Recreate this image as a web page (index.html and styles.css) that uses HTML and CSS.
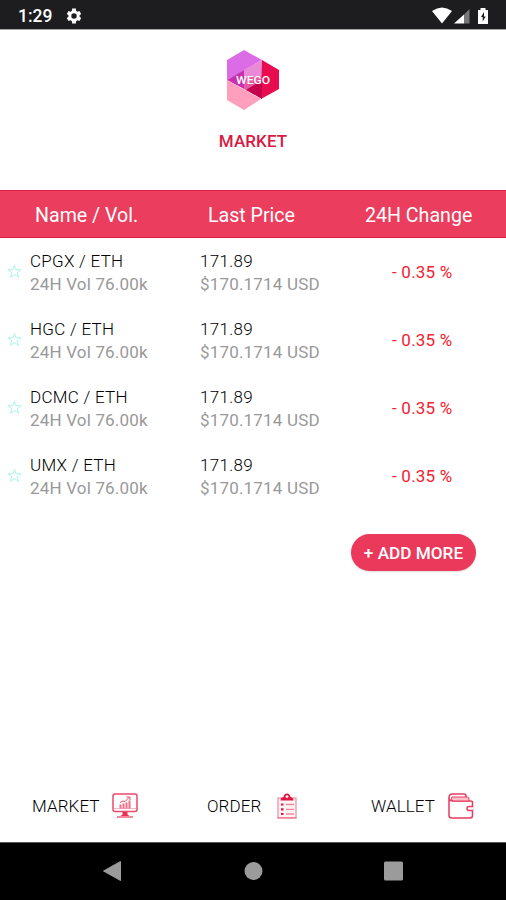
FILE: index.html
```html
<!DOCTYPE html>
<html lang="en">
<head>
<meta charset="utf-8">
<title>Market</title>
<link rel="stylesheet" href="styles.css">
</head>
<body>
<div class="screen">
  <header class="status">
    <span class="time">1:29</span>
    <svg class="gear" width="18" height="18" viewBox="0 0 24 24"><path fill="#fff" fill-rule="evenodd" d="M19.400 13a7.500 7.500 0 0 0 0-2l2.200-1.700-2.400-4.100-2.600 1a8 8 0 0 0-1.700-1L14.500 2h-5l-.4 3.200a8 8 0 0 0-1.700 1l-2.600-1-2.400 4.100L4.600 11a7.500 7.500 0 0 0 0 2l-2.200 1.700 2.400 4.100 2.600-1a8 8 0 0 0 1.700 1l.4 3.200h5l.4-3.200a8 8 0 0 0 1.700-1l2.600 1 2.400-4.100zM12 15.600a3.600 3.600 0 1 1 0-7.200 3.600 3.600 0 0 1 0 7.200z"/></svg>
    <svg class="signals" width="60" height="20" viewBox="0 0 60 20"><path fill="#fff" d="M2 5Q12-2 22 5L12 17.500z"/><path fill="#fff" d="M24 17.500 34 8.500v9z"/><path fill="#77777a" d="M34 8.500 39.500 3v14.500H34z"/><path fill="#fff" d="M48 4h2.500V2h5v2H58v14H48z"/><path fill="#1d1d20" d="m54 6-3 5h1.700v4.500l3-5H54z"/></svg>
  </header>
  <div class="brand">
    <svg width="54" height="60" viewBox="0 0 54 60">
      <path fill="#dc6ce6" d="M18 0 36 10 1 30V10z"/>
      <path fill="#c930b0" d="M1 30 18 20v19z"/>
      <path fill="#e98ad6" d="M18 20 36 10v19L18 30z"/>
      <path fill="#e45aa6" d="M18 28 36 26v22L18 39z"/>
      <path fill="#ff9ebd" d="M1 30 35 49 18 60 1 50z"/>
      <path fill="#e90b4f" d="M36 10 53 20v19L35 49z"/>
      <path fill="#c7004e" d="m20 40 16-10v19z"/>
      <text class="logo-text" x="27" y="33.500" text-anchor="middle" textLength="34" lengthAdjust="spacingAndGlyphs">WEGO</text>
    </svg>
    <h1>MARKET</h1>
  </div>
  <div class="thead"><span>Name / Vol.</span><span>Last Price</span><span>24H Change</span></div>
  <main>
    <div class="row"><svg class="star" viewBox="0 0 16 16"><path d="m8 1.200 1.700 4.900H15l-4.200 3.200 1.600 5L8 11.300l-4.400 3 1.600-5L1 6.100h5.300z"/></svg><div><p>CPGX / ETH</p><p class="sub">24H Vol 76.00k</p></div><div><p>171.89</p><p class="sub">$170.1714 USD</p></div><p class="change">- 0.35 %</p></div>
    <div class="row"><svg class="star" viewBox="0 0 16 16"><path d="m8 1.200 1.700 4.900H15l-4.200 3.200 1.600 5L8 11.300l-4.400 3 1.600-5L1 6.100h5.300z"/></svg><div><p>HGC / ETH</p><p class="sub">24H Vol 76.00k</p></div><div><p>171.89</p><p class="sub">$170.1714 USD</p></div><p class="change">- 0.35 %</p></div>
    <div class="row"><svg class="star" viewBox="0 0 16 16"><path d="m8 1.200 1.700 4.900H15l-4.200 3.200 1.600 5L8 11.300l-4.400 3 1.600-5L1 6.100h5.300z"/></svg><div><p>DCMC / ETH</p><p class="sub">24H Vol 76.00k</p></div><div><p>171.89</p><p class="sub">$170.1714 USD</p></div><p class="change">- 0.35 %</p></div>
    <div class="row"><svg class="star" viewBox="0 0 16 16"><path d="m8 1.200 1.700 4.900H15l-4.200 3.200 1.600 5L8 11.300l-4.400 3 1.600-5L1 6.100h5.300z"/></svg><div><p>UMX / ETH</p><p class="sub">24H Vol 76.00k</p></div><div><p>171.89</p><p class="sub">$170.1714 USD</p></div><p class="change">- 0.35 %</p></div>
    <button class="add">+ ADD MORE</button>
  </main>
  <nav class="tabs">
    <div class="tab t1"><span>MARKET</span><svg width="26" height="26" viewBox="0 0 26 26" fill="none" stroke="#ea4a69"><rect x="1" y="1" width="24" height="17.500" rx="2" stroke-width="1.500"/><path d="M2 15.500h22" stroke-width=".8" opacity=".5"/><path d="M8.500 15.500v-4M11.500 15.500v-5M14.500 15.500V9.500M17.500 15.500v-8" stroke-width="2" opacity=".8"/><path d="m8 9.500 3-1.500 2 .5 4-4M14.500 4H18v3"/><path fill="#e83355" stroke="none" d="M10.500 19h5v2.500l2 1.500h-9l2-1.500z"/><path d="M5 24h16" stroke-width="1.300"/></svg></div>
    <div class="tab t2"><span>ORDER</span><svg width="22" height="26" viewBox="0 0 22 26" fill="none" stroke="#f3a0ae"><path d="M2 5h18v20H2z" fill="#fff4f5" stroke-width="1.500"/><path d="M1.500 24.800h19" stroke="#e97186"/><path fill="#df1741" fill-rule="evenodd" stroke="none" d="M4.500 7.500Q4.500 4.500 7.500 4 8 .5 11 .5T14.500 4q3 .5 3 3.500zM11 2.200a1.500 1.500 0 1 0 0 3 1.500 1.500 0 0 0 0-3z"/><path d="M5 11.500h2.500M5 16.300h2.500M5 21h2.500" stroke="#df1741" stroke-width="2.200"/><path d="M10 11.500h8M10 16.300h8M10 21h8" stroke="#ef8798" stroke-width="1.300"/></svg></div>
    <div class="tab t3"><span>WALLET</span><svg width="26" height="26" viewBox="0 0 26 26" fill="none" stroke="#e63d60" stroke-width="1.500"><path d="M1 4v18.500Q1 25 3.500 25H22q2.500 0 2.500-2.500v-13Q24.500 8 22.500 8H5Q1 8 1 4.500T4.500 1H16q2 0 2 2v1"/><path fill="#ffc1cc" d="M4 4h15.500q1.500 0 1.500 2v2H5Q2 6 4 4z" stroke-width="1"/><path d="M25 13.500h-4q-2 0-2 2t2 2h4" fill="#fff"/></svg></div>
  </nav>
  <footer class="navbar">
    <svg width="506" height="58" viewBox="0 0 506 58"><path fill="#9b9b9b" stroke="#9b9b9b" stroke-linejoin="round" d="m103.500 28 17-9.500v19z"/><circle cx="253.500" cy="28" r="9" fill="#9b9b9b"/><rect x="384" y="18.500" width="19" height="19" rx="1.500" fill="#9b9b9b"/></svg>
  </footer>
</div>
</body>
</html>
```
FILE: styles.css
```css
* { box-sizing: border-box; }
body { margin: 0; background: #fff; font-family: Roboto, "Liberation Sans", sans-serif; }
h1, p { margin: 0; }
svg { display: block; flex: none; }
.screen { width: 506px; height: 900px; display: flex; flex-direction: column; overflow: hidden; }
.status { height: 30px; flex: none; background: #1d1d20; border-bottom: 1px solid #a8a4a4; display: flex; align-items: center; padding: 2px 16px 0 18px; color: #fff; }
.time { font-size: 17.5px; font-weight: 500; width: 47px; white-space: nowrap; }
.signals { margin-left: auto; }
.brand { height: 160px; flex: none; display: flex; flex-direction: column; align-items: center; padding-top: 20px; }
.logo-text { font-size: 10px; font-weight: 500; fill: #fff; }
.brand h1 { margin-top: 20px; line-height: 22px; font-size: 17px; font-weight: 500; letter-spacing: .1px; color: #d81b43; }
.thead { height: 48px; flex: none; background: #eb3d5d; border: solid #df1f45; border-width: 1px 0; color: #fff; font-size: 19.6px; line-height: 50px; display: grid; grid-template-columns: 173px 157px 1fr; padding-left: 35px; white-space: nowrap; }
main { flex: 1; display: flex; flex-direction: column; padding-top: 12px; }
.row { height: 68px; flex: none; display: grid; grid-template-columns: 30px 170px 192px 1fr; font-size: 17px; line-height: 23px; font-weight: 300; letter-spacing: .28px; color: #000; white-space: nowrap; align-items: start; }
.star { width: 15px; height: 15px; margin: 14px 0 0 7px; fill: none; stroke: #a5f3e5; stroke-width: 1; }
.sub { color: #999; font-weight: 400; letter-spacing: .18px; }
.change { color: #f5202e; padding-top: 11px; font-weight: 400; letter-spacing: .22px; }
.add { align-self: flex-end; margin: 12px 30px 0 0; width: 125px; height: 37px; padding: 0; border: 0; border-radius: 19px; background: #ea395b; box-shadow: 0 1px 2px #0002; color: #fff; font: 500 17.2px/38px Roboto, sans-serif; white-space: nowrap; }
.tabs { height: 72px; flex: none; display: grid; grid-template-columns: 175px 164px 1fr; padding: 0 0 0 32px; align-items: center; font-size: 17px; font-weight: 300; letter-spacing: .1px; color: #000; }
.tab { display: flex; align-items: center; }
.t1 span { width: 80px; }
.t2 span { width: 69px; }
.t3 span { width: 77px; }
.navbar { height: 58px; flex: none; background: #000; border-top: 1px solid #555; }
```
